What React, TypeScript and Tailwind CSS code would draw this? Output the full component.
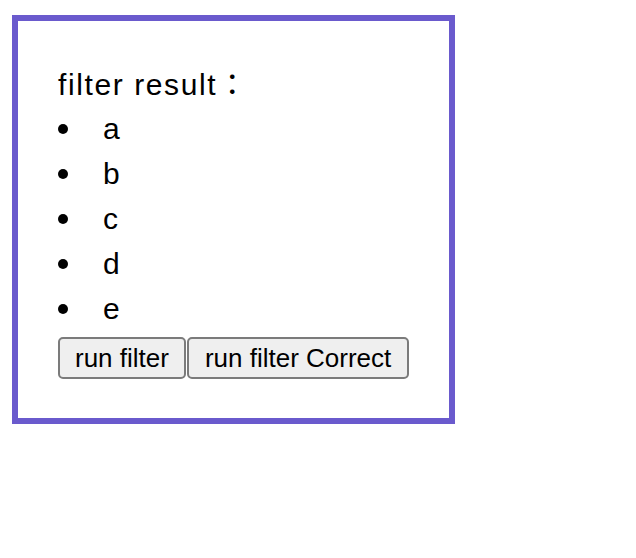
import { useState } from "react";

const items = ["a", "b", "c", "d", "e"];

export default function App() {
  const [list, setList] = useState(items);

  return (
    <div className="pt-[15px] pl-[12px] font-['Liberation_Sans',Arial,sans-serif] text-black">
      {/* Box */}
      <div className="w-[443px] border-[6px] border-[#6a5acd] px-[40px] pt-[40px] pb-[39px]">
        <h2 className="h-[45px] leading-[43px] text-[30px] tracking-[1.6px]">
          filter result
          <span className="font-['Noto_Sans_CJK_TC',sans-serif] tracking-normal">：</span>
        </h2>

        <ul>
          {list.map((item) => (
            <li key={item} className="flex items-center h-[45px] text-[30px] leading-[45px]">
              <span className="w-[10px] h-[10px] rounded-full bg-black" />
              <span className="ml-[35px]">{item}</span>
            </li>
          ))}
        </ul>

        {/* Buttons */}
        <div className="flex mt-[6px] gap-[1px]">
          <button
            onClick={() => setList(items.filter((i) => i !== "b"))}
            className="shrink-0 whitespace-nowrap h-[42px] px-[15px] text-[26px] leading-none bg-[#efefef] border-2 border-[#7b7b7b] rounded-[5px]"
          >
            run filter
          </button>
          <button
            onClick={() => setList(items)}
            className="shrink-0 whitespace-nowrap h-[42px] px-[16px] text-[26px] leading-none bg-[#efefef] border-2 border-[#7b7b7b] rounded-[5px]"
          >
            run filter Correct
          </button>
        </div>
      </div>
    </div>
  );
}
